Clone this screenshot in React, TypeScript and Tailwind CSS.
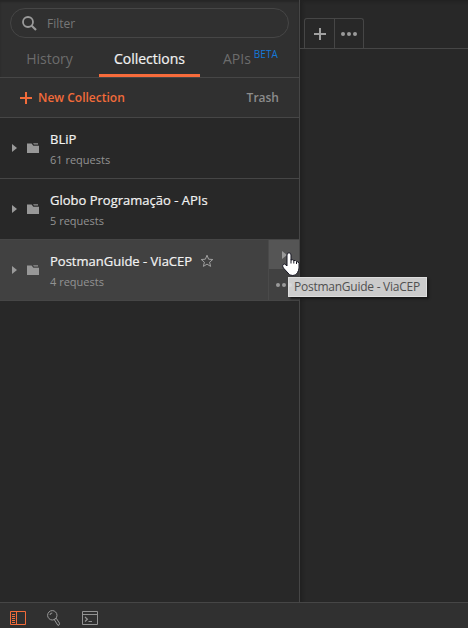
import type { ReactNode } from 'react';

function FolderIcon() {
  return (
    <svg width="12" height="10" viewBox="0 0 12 10" className="block shrink-0">
      <path d="M0 .5H4.6L6.3 2.7H12V10H0Z" fill="#989898" />
      <path d="M6 .3H11V1.5H7Z" fill="#909090" />
    </svg>
  );
}

function Dots({ className = '' }: { className?: string }) {
  return (
    <svg width="16" height="4" viewBox="0 0 16 4" className={className} fill="#9a9a9a">
      <circle cx="2" cy="2" r="2" />
      <circle cx="8" cy="2" r="2" />
      <circle cx="14" cy="2" r="2" />
    </svg>
  );
}

type RowProps = { name: string; count: string; active?: boolean; children?: ReactNode };

function Row({ name, count, active, children }: RowProps) {
  return (
    <div className={`flex h-[61px] border-b border-[#464646] ${active ? 'bg-[#414141]' : 'bg-[#282828]'}`}>
      <div className="flex w-[50px] shrink-0 items-center pl-3">
        <svg width="5" height="8" viewBox="0 0 5 8" className="mr-[10px] block">
          <path d="M0 0L5 4L0 8Z" fill="#9a9a9a" />
        </svg>
        <FolderIcon />
      </div>
      <div className="flex-1 whitespace-nowrap pt-[11px]">
        <div className="flex items-center">
          <span className="text-[13px] leading-[20px] font-normal text-[#f2f2f2] [-webkit-text-stroke:0.2px_#f2f2f2]">{name}</span>
          {active && (
            <svg width="14" height="14" viewBox="0 0 14 14" className="ml-2 block">
              <path d="M7 1.2L8.6 5.2L12.8 5.5L9.6 8.2L10.6 12.4L7 10.1L3.4 12.4L4.4 8.2L1.2 5.5L5.4 5.2Z" fill="none" stroke="#a0a0a0" />
            </svg>
          )}
        </div>
        <div className="pt-[2px] text-[11px] leading-[18px] text-[#939393]">{count}</div>
      </div>
      {children}
    </div>
  );
}

export default function App() {
  return (
    <div className="relative flex h-[628px] w-[468px] flex-col overflow-hidden bg-[#282828] font-['Open_Sans','Noto_Sans',sans-serif]">
      <div className="flex min-h-0 flex-1">
        <aside className="flex w-[300px] shrink-0 flex-col border-r border-[#464646]">
          <div className="h-[78px] border-b border-[#464646] bg-[#303030] pt-2 shadow-[inset_0_2px_2px_#262626]">
            <div className="mx-[10px] flex h-[30px] items-center rounded-full border border-[#464646] pl-[11px]">
              <svg width="15" height="15" viewBox="0 0 15 15" fill="none" stroke="#9a9a9a" strokeWidth="1.8">
                <circle cx="6" cy="6" r="5" />
                <path d="M9.7 9.7L14 14" strokeWidth="2.1" />
              </svg>
              <span className="ml-[10px] pt-px text-[12px] leading-[18px] text-[#777]">Filter</span>
            </div>
            <nav className="flex h-[39px] text-[14px] leading-[20px] whitespace-nowrap">
              <div className="w-[99px] pt-[11px] text-center text-[#6c6c6c]">History</div>
              <div className="w-[101px] border-b-[3px] border-[#f76b3b] pt-[11px] text-center text-[#f2f2f2] [-webkit-text-stroke:0.2px_#f2f2f2]">
                Collections
              </div>
              <div className="flex flex-1 pt-[11px] pl-[23px] text-[#6c6c6c]">
                APIs
                <span className="-mt-[5px] ml-[3px] text-[10px] text-[#1478d8]">BETA</span>
              </div>
            </nav>
          </div>
          <div className="flex h-[40px] items-center justify-between border-b border-[#464646] bg-[#303030] pr-5 pl-5 text-[12px] leading-[18px] font-semibold">
            <div className="flex items-center text-[#f26b3a]">
              <svg width="12" height="12" viewBox="0 0 12 12" className="mr-[6px]" fill="#f26b3a">
                <path d="M5 0H7V5H12V7H7V12H5V7H0V5H5Z" />
              </svg>
              New Collection
            </div>
            <span className="text-[#8c8c8c]">Trash</span>
          </div>
          <Row name="BLiP" count="61 requests" />
          <Row name="Globo Programação - APIs" count="5 requests" />
          <Row name="PostmanGuide - ViaCEP" count="4 requests" active>
            <div className="flex w-[31px] shrink-0 flex-col border-l border-[#4a4a4a]">
              <div className="flex h-[29px] items-center bg-[#555] pl-[13px]">
                <svg width="5" height="8" viewBox="0 0 5 8"><path d="M0 0L5 4L0 8Z" fill="#999" /></svg>
              </div>
              <div className="flex flex-1 items-center pl-[7px]"><Dots /></div>
            </div>
          </Row>
        </aside>
        <main className="min-w-0 flex-1 shadow-[inset_3px_2px_3px_#222]">
          <div className="flex h-[49px] items-end border-b border-[#464646] pl-1">
            <div className="flex h-[30px] w-[60px] rounded-t-[3px] border border-b-0 border-[#464646]">
              <div className="flex w-[30px] items-center justify-center border-r border-[#464646]">
                <svg width="12" height="12" viewBox="0 0 12 12" fill="#a0a0a0"><path d="M5 0H7V5H12V7H7V12H5V7H0V5H5Z" /></svg>
              </div>
              <div className="flex flex-1 items-center justify-center"><Dots /></div>
            </div>
          </div>
        </main>
      </div>
      <footer className="flex h-[26px] shrink-0 items-start border-t border-[#464646] bg-[#303030] pl-[10px]">
        <svg width="16" height="14" viewBox="0 0 16 14" className="mt-2" fill="none" stroke="#f26b3a">
          <path d="M.5 .5H15.5V13.5H.5ZM6.5 .5V13.5M2 3.5H5M2 5.5H5M2 7.5H5M2 9.5H5M2 11.5H5" />
        </svg>
        <svg width="14" height="17" viewBox="0 0 14 17" className="mt-[7px] ml-[21px]" fill="none" stroke="#989898">
          <circle cx="5.3" cy="5.3" r="4.7" />
          <path d="M3 5Q3 3 5.3 3M7.2 9.5L9.2 8.2L12.5 13.2Q12.8 15 11 15.5L7.2 9.5" />
        </svg>
        <svg width="16" height="14" viewBox="0 0 16 14" className="mt-2 ml-[21px]" fill="none" stroke="#929292">
          <path d="M.5 .5H15.5V13.5H.5ZM.5 3.5H15.5" />
          <path d="M3 6L5.4 8.2L3 10.5M6.5 10.5H10" strokeWidth="1.2" />
        </svg>
      </footer>
      <div className="absolute top-[277px] left-[288px] h-[20px] w-[139px] border border-[#dedede] bg-[#e1e1e1]/88 pl-[5px] text-[12px] leading-[17px] tracking-[-0.25px] whitespace-nowrap text-[#505050] shadow-[2px_2px_2px_#181818]">
        PostmanGuide - ViaCEP
      </div>
      <svg width="19" height="25" viewBox="0 0 19 25" className="absolute top-[252px] left-[281px]">
        <path d="M6 3Q6 .8 8 .8T10 3V8Q11.8 7.2 12.8 8.6Q14.6 7.8 15.5 9.6Q17.8 9.2 18 11.5V16Q17.8 18.5 16.5 20.5Q15.5 23.5 11.8 23.5Q8 23.5 7 21L2.4 16Q.8 13.6 2.2 12.5T5 13L6 14Z" fill="#fff" stroke="#161622" />
        <path d="M10 7.5V11.5M12.8 8.8V11.5M15.5 9.8V12" stroke="#161622" fill="none" />
      </svg>
    </div>
  );
}
